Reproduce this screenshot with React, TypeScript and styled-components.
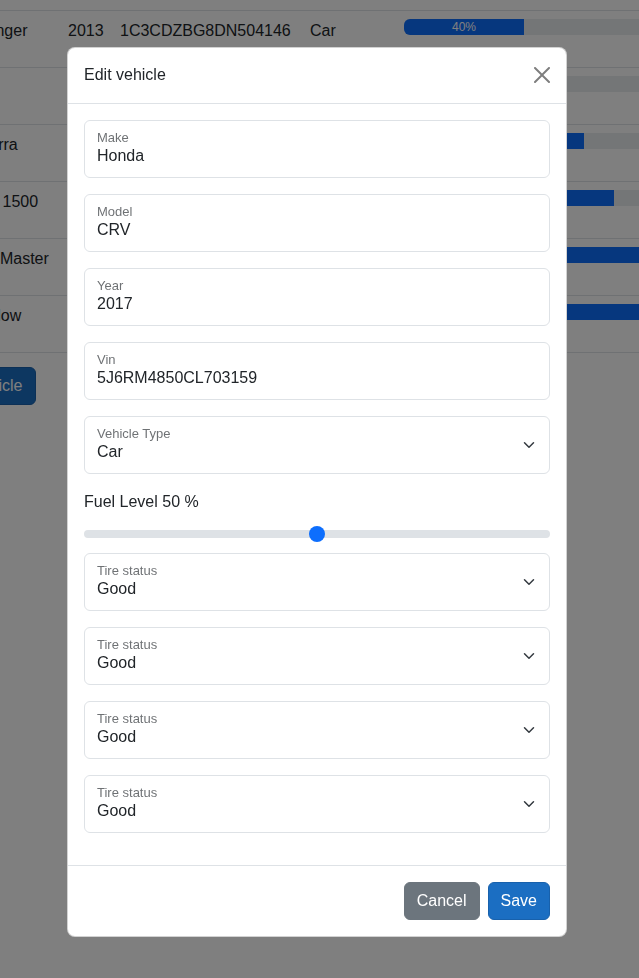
import styled, { createGlobalStyle } from 'styled-components';

const GlobalStyle = createGlobalStyle`
  html, body {
    margin: 0;
    padding: 0;
    background: #fff;
    color: #212529;
    font-family: "Liberation Sans", Arial, sans-serif;
    font-size: 16px;
    line-height: 1.5;
    overflow: hidden;
  }
  * { box-sizing: border-box; }
`;

// Background page: the vehicle list, partly scrolled off to the left.
const Page = styled.div`
  padding-top: 10px;
  margin-left: -75px;
`;

const Table = styled.div`
  margin-left: 42px;
  width: 1000px;
  border-top: 1px solid #dee2e6;
`;

const Row = styled.div`
  display: grid;
  grid-template-columns: 93px 52px 190px 94px 316px 1fr;
  height: 57px;
  border-bottom: 1px solid #dee2e6;
`;

const Cell = styled.div`
  padding: 8px;
  white-space: nowrap;
`;

const Progress = styled.div`
  display: flex;
  height: 16px;
  width: 300px;
  overflow: hidden;
  background: #e9ecef;
  border-radius: 6px;
  font-size: 12px;
`;

const ProgressBar = styled.div`
  display: flex;
  flex-direction: column;
  justify-content: center;
  background: #0d6efd;
  color: #fff;
  text-align: center;
  line-height: 16px;
`;

const PrimaryButton = styled.button`
  display: inline-block;
  padding: 6px 12px;
  font: inherit;
  line-height: 24px;
  color: #fff;
  background: #1b6ec2;
  border: 1px solid #1861ac;
  border-radius: 6px;
`;

const AddButton = styled(PrimaryButton)`
  margin-top: 14px;
`;

const SecondaryButton = styled(PrimaryButton)`
  background: #6c757d;
  border-color: #6c757d;
`;

// Modal
const Backdrop = styled.div`
  position: fixed;
  inset: 0;
  background: rgba(0, 0, 0, 0.5);
  padding: 47px 0 0 67px;
`;

const Dialog = styled.div`
  width: 500px;
  background: #fff;
  border: 1px solid rgba(0, 0, 0, 0.175);
  border-radius: 8px;
  overflow: hidden;
`;

const Header = styled.div`
  display: flex;
  align-items: center;
  justify-content: space-between;
  padding: 15px 16px 16px;
  border-bottom: 1px solid #dee2e6;
`;

const Title = styled.h5`
  margin: 0;
  font-size: 16px;
  font-weight: 400;
  line-height: 24px;
`;

const CloseButton = styled.button`
  display: flex;
  align-items: center;
  justify-content: center;
  width: 32px;
  height: 32px;
  margin: -8px -8px -8px auto;
  padding: 0;
  border: 0;
  background: transparent;
  opacity: 0.5;
`;

const Body = styled.div`
  padding: 16px;
`;

const Field = styled.div`
  display: flex;
  align-items: center;
  height: 58px;
  margin-bottom: 16px;
  padding: 0 12px;
  border: 1px solid #dee2e6;
  border-radius: 6px;
`;

const FieldText = styled.div`
  flex: 1;
  align-self: stretch;
  padding-top: 9px;
`;

const FieldLabel = styled.div`
  font-size: 13px;
  line-height: 16px;
  color: rgba(33, 37, 41, 0.65);
`;

const FieldValue = styled.div`
  font-size: 16px;
  line-height: 20px;
`;

const FormLabel = styled.label`
  display: block;
  margin-bottom: 8px;
  line-height: 24px;
`;

const Range = styled.input`
  display: block;
  width: 100%;
  height: 24px;
  margin: 0 0 7px;
  padding: 0;
  background: transparent;
  appearance: none;
  -webkit-appearance: none;

  &::-webkit-slider-runnable-track {
    height: 8px;
    background: #dee2e6;
    border: 0;
    border-radius: 16px;
  }
  &::-webkit-slider-thumb {
    -webkit-appearance: none;
    appearance: none;
    width: 16px;
    height: 16px;
    margin-top: -4px;
    border: 0;
    border-radius: 50%;
    background: #0d6efd;
  }
`;

const Footer = styled.div`
  display: flex;
  justify-content: flex-end;
  gap: 8px;
  padding: 16px;
  border-top: 1px solid #dee2e6;
`;

const vehicles = [
  { model: 'Ranger', year: 2013, vin: '1C3CDZBG8DN504146', type: 'Car', fuel: 40 },
  { model: 'Fit', year: 2015, vin: 'JHMGE8H59FC012345', type: 'Car', fuel: 20 },
  { model: 'Sierra', year: 2018, vin: '1GTV2LEC4JZ123456', type: 'Truck', fuel: 60 },
  { model: 'HD 1500', year: 2016, vin: '3GCUKREC2GG123456', type: 'Truck', fuel: 70 },
  { model: 'ProMaster', year: 2019, vin: '3C6TRVDG9KE123456', type: 'Van', fuel: 80 },
  { model: 'Willow', year: 2020, vin: '5YJ3E1EA7LF123456', type: 'Car', fuel: 90 },
];

const textFields = [
  { label: 'Make', value: 'Honda' },
  { label: 'Model', value: 'CRV' },
  { label: 'Year', value: '2017' },
  { label: 'Vin', value: '5J6RM4850CL703159' },
];

function Chevron() {
  return (
    <svg width="16" height="12" viewBox="0 0 16 16" aria-hidden>
      <path
        d="m2 5 6 6 6-6"
        fill="none"
        stroke="#343a40"
        strokeWidth="2"
        strokeLinecap="round"
        strokeLinejoin="round"
      />
    </svg>
  );
}

function FloatingField({ label, value, select }: { label: string; value: string; select?: boolean }) {
  return (
    <Field>
      <FieldText>
        <FieldLabel>{label}</FieldLabel>
        <FieldValue>{value}</FieldValue>
      </FieldText>
      {select && <Chevron />}
    </Field>
  );
}

export default function App() {
  return (
    <>
      <GlobalStyle />
      <Page>
        <Table>
          {vehicles.map((v) => (
            <Row key={v.vin}>
              <Cell>{v.model}</Cell>
              <Cell>{v.year}</Cell>
              <Cell>{v.vin}</Cell>
              <Cell>{v.type}</Cell>
              <Cell>
                <Progress>
                  <ProgressBar style={{ width: `${v.fuel}%` }}>{v.fuel}%</ProgressBar>
                </Progress>
              </Cell>
              <Cell />
            </Row>
          ))}
        </Table>
        <AddButton>Add Vehicle</AddButton>
      </Page>

      <Backdrop>
        <Dialog role="dialog" aria-label="Edit vehicle">
          <Header>
            <Title>Edit vehicle</Title>
            <CloseButton aria-label="Close">
              <svg width="16" height="16" viewBox="0 0 16 16" aria-hidden>
                <path d="M.293.293a1 1 0 0 1 1.414 0L8 6.586 14.293.293a1 1 0 1 1 1.414 1.414L9.414 8l6.293 6.293a1 1 0 0 1-1.414 1.414L8 9.414l-6.293 6.293a1 1 0 0 1-1.414-1.414L6.586 8 .293 1.707a1 1 0 0 1 0-1.414" />
              </svg>
            </CloseButton>
          </Header>
          <Body>
            {textFields.map((f) => (
              <FloatingField key={f.label} label={f.label} value={f.value} />
            ))}
            <FloatingField label="Vehicle Type" value="Car" select />
            <FormLabel>Fuel Level 50 %</FormLabel>
            <Range type="range" min={0} max={100} defaultValue={50} />
            {[0, 1, 2, 3].map((i) => (
              <FloatingField key={i} label="Tire status" value="Good" select />
            ))}
          </Body>
          <Footer>
            <SecondaryButton>Cancel</SecondaryButton>
            <PrimaryButton>Save</PrimaryButton>
          </Footer>
        </Dialog>
      </Backdrop>
    </>
  );
}
